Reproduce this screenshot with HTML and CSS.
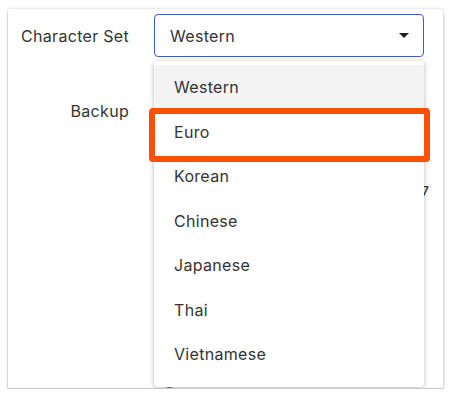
FILE: index.html
```html
<!DOCTYPE html>
<html lang="en">
<head>
  <meta charset="UTF-8">
  <title>Character Set</title>
  <link rel="stylesheet" href="styles.css">
</head>
<body>
  <div class="panel">
    <div class="form">
      <label class="label">Character Set</label>
      <div class="select">
        <span>Western</span>
        <span class="arrow"></span>
      </div>

      <label class="label">Backup</label>
      <div class="value"></div>

      <div class="label"></div>
      <div class="value value-right">7</div>

      <div class="label"></div>
      <div class="value value-top"><span class="radio"></span></div>
    </div>

    <ul class="menu">
      <li class="item active">Western</li>
      <li class="item">Euro</li>
      <li class="item">Korean</li>
      <li class="item">Chinese</li>
      <li class="item">Japanese</li>
      <li class="item">Thai</li>
      <li class="item">Vietnamese</li>
    </ul>

    <div class="highlight"></div>
  </div>
</body>
</html>
```

FILE: styles.css
```css
body {
  margin: 0;
  padding-top: 9px;
  background-color: #fff;
  font-family: Inter, "Noto Sans", sans-serif;
  color: #333;
}
.panel {
  position: relative;
  width: 435px;
  height: 379px;
  margin-left: 8px;
  background-color: #fff;
  border-bottom: 1px solid #c8c8c8;
  box-shadow: 0 3px 3px -1px rgba(0, 0, 0, 0.45), 0 0 2px rgba(0, 0, 0, 0.25);
  overflow: hidden;
}
.form {
  display: grid;
  grid-template-columns: 121px 270px;
  grid-auto-rows: 43px;
  column-gap: 25px;
  row-gap: 32px;
  padding-top: 5px;
}
.label {
  display: flex;
  align-items: center;
  justify-content: flex-end;
  font-size: 16px;
  letter-spacing: 0.3px;
}
.select {
  display: flex;
  align-items: center;
  justify-content: space-between;
  padding: 0 14px 0 15px;
  border: 1px solid #3c5fc4;
  border-radius: 4px;
  font-size: 16px;
  letter-spacing: 0.3px;
}
.arrow {
  width: 0;
  height: 0;
  border-left: 5px solid transparent;
  border-right: 5px solid transparent;
  border-top: 5px solid #222;
}
.value {
  display: flex;
  align-items: center;
  font-size: 16px;
}
.value-right {
  justify-content: flex-end;
  margin-right: -5px;
  margin-top: 12px;
}
.value-top {
  align-items: flex-start;
}
.radio {
  width: 17px;
  height: 17px;
  margin: 128px 0 0 5px;
  border: 2px solid #666;
  border-radius: 50%;
}
.menu {
  position: absolute;
  left: 146px;
  top: 52px;
  width: 270px;
  height: 322px;
  margin: 0;
  padding: 4px 0 0;
  list-style: none;
  background-color: #fff;
  border-radius: 4px;
  box-shadow: 0 1px 5px rgba(0, 0, 0, 0.3);
}
.item {
  height: 44.5px;
  line-height: 44.5px;
  padding-left: 20px;
  font-size: 16px;
  letter-spacing: 0.3px;
}
.item.active {
  background-color: #f4f4f4;
}
.highlight {
  position: absolute;
  left: 141px;
  top: 99px;
  width: 281px;
  height: 54px;
  box-sizing: border-box;
  border: 6px solid #ff4f00;
  border-radius: 4px;
}
```
